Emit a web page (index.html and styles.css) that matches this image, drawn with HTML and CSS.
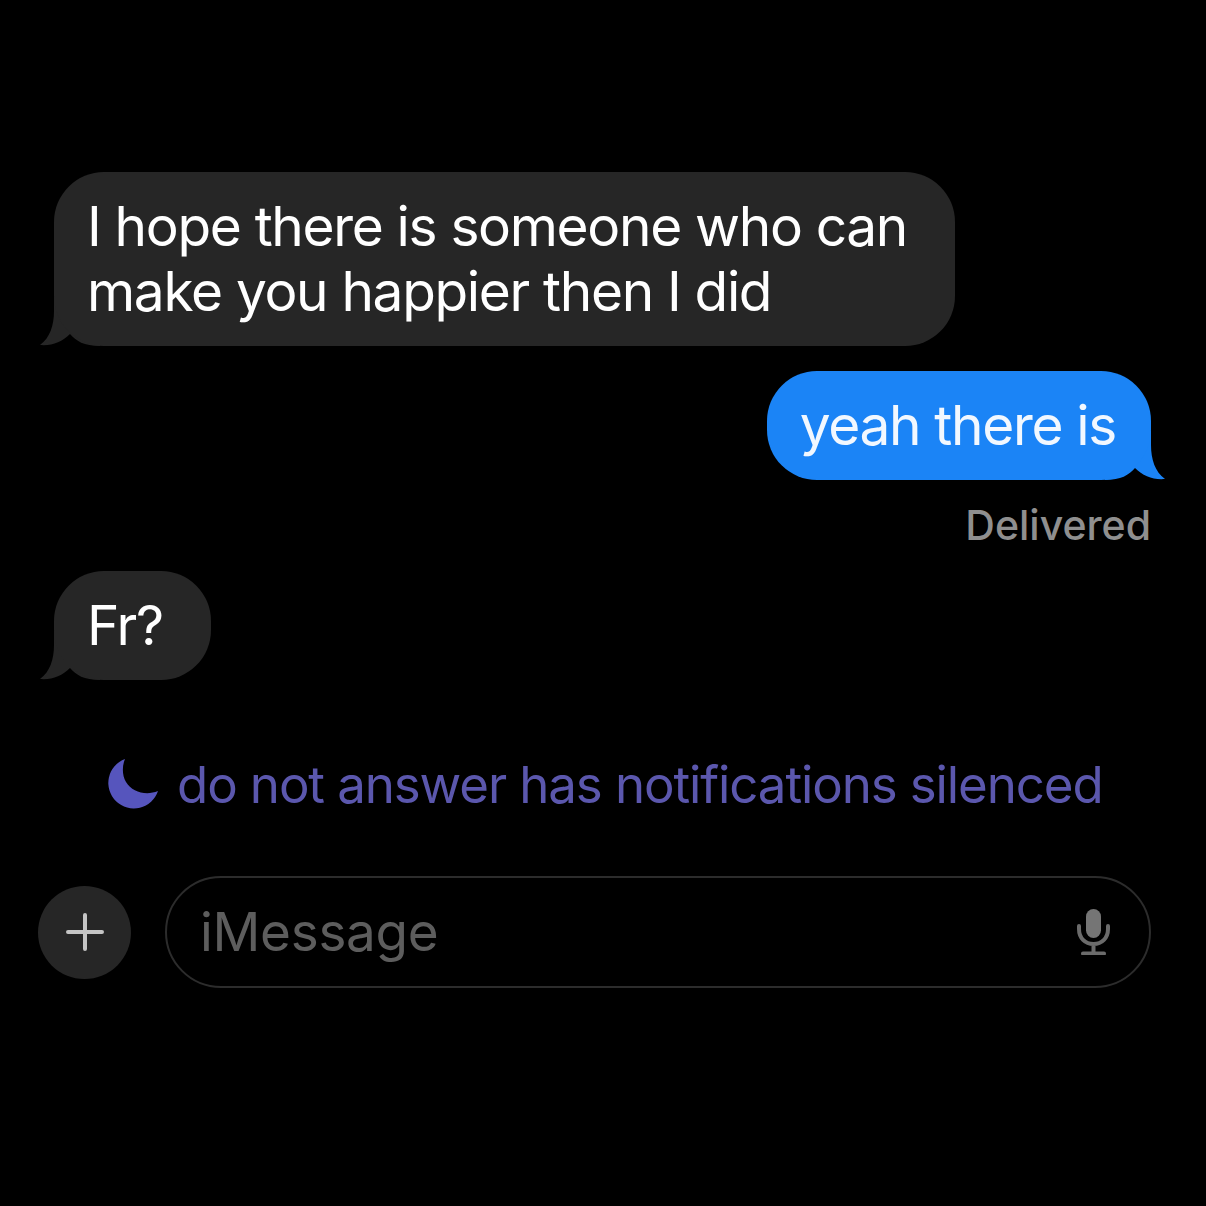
FILE: index.html
```html
<!DOCTYPE html>
<html lang="en">
<head>
  <meta charset="UTF-8">
  <meta name="viewport" content="width=device-width, initial-scale=1.0">
  <title>Messages</title>
  <link rel="stylesheet" href="styles.css">
</head>
<body>

<div id="thread">
  <div class="bubble received">
    <svg class="tail" width="60" height="50" viewBox="0 0 60 50"><path d="M14 0V14C14 28 10 41 0 48C12 49 22 45 30 37C36 44 44 49 60 49V0Z"/></svg>
    I hope there is someone who can<br>make you happier then I did
  </div>

  <div class="bubble sent">
    yeah there is
    <svg class="tail" width="60" height="50" viewBox="0 0 60 50"><path d="M46 0V14C46 28 50 41 60 48C48 49 38 45 30 37C24 44 16 49 0 49V0Z"/></svg>
  </div>
  <div class="status">Delivered</div>

  <div class="bubble received">
    <svg class="tail" width="60" height="50" viewBox="0 0 60 50"><path d="M14 0V14C14 28 10 41 0 48C12 49 22 45 30 37C36 44 44 49 60 49V0Z"/></svg>
    Fr?
  </div>

  <div class="silenced">
    <svg class="moon" width="50" height="51" viewBox="0 0 50 51"><path d="M17 1A25.500 25.500 0 1 0 50 33C38 38 24 34 18 24C14 17 14 8 17 1Z"/></svg>
    <span>do not answer has notifications silenced</span>
  </div>

  <div class="composer">
    <div class="plus">
      <svg width="38" height="38" viewBox="0 0 38 38"><path d="M2 19H36M19 2V36"/></svg>
    </div>
    <div class="field">
      <span>iMessage</span>
      <svg class="mic" width="34" height="46" viewBox="0 0 34 46">
        <rect class="capsule" x="9" y="0" width="15" height="29" rx="7.500"/>
        <path d="M2 17V20C2 29 8 35 16.500 35C25 35 31 29 31 20V17M16.500 35V44M6 44.500H27"/>
      </svg>
    </div>
  </div>
</div>

</body>
</html>
```

FILE: styles.css
```css
body {
  font-family: Inter, 'Liberation Sans', sans-serif;
  background-color: #000;
  margin: 0;
}

#thread {
  display: flex;
  flex-direction: column;
  align-items: flex-start;
  padding: 172px 55px 0 54px;
}

.bubble {
  position: relative;
  font-size: 55px;
  line-height: 65px;
  letter-spacing: -1.33px;
  color: #fff;
  white-space: nowrap;
  border-radius: 50px;
}

.tail {
  position: absolute;
  bottom: -1px;
  z-index: -1;
}

.received {
  padding: 22px 48px 22px 33px;
  background-color: #262626;
}

.received .tail {
  left: -14px;
  fill: #262626;
}

.received + .received,
.status + .received {
  margin-top: 22px;
}

.sent {
  align-self: flex-end;
  padding: 22px 35px 22px 33px;
  margin-top: 25px;
  background-color: #1b84f6;
  color: #f2f8ff;
}

.sent .tail {
  right: -14px;
  fill: #1b84f6;
}

.status {
  align-self: flex-end;
  margin-top: 21px;
  font-size: 41px;
  line-height: 48px;
  font-weight: 500;
  color: #8f8f8f;
}

.silenced {
  display: flex;
  align-items: center;
  gap: 19px;
  margin: 75px 0 0 54px;
  font-size: 51px;
  line-height: 60px;
  letter-spacing: -1.1px;
  color: #5b57ad;
}

.moon {
  margin-bottom: 4px;
  fill: #5655bd;
}

.composer {
  display: flex;
  align-items: center;
  gap: 34px;
  width: 1113px;
  margin: 61px 0 0 -16px;
}

.plus {
  display: flex;
  align-items: center;
  justify-content: center;
  width: 93px;
  height: 93px;
  border-radius: 50%;
  background-color: #262626;
}

.plus svg {
  fill: none;
  stroke: #c4c4c4;
  stroke-width: 4;
  stroke-linecap: round;
}

.field {
  flex: 1;
  display: flex;
  align-items: center;
  justify-content: space-between;
  box-sizing: border-box;
  height: 112px;
  padding: 0 38px 0 33px;
  border: 2px solid #2c2c2c;
  border-radius: 56px;
  font-size: 53px;
  letter-spacing: -0.3px;
  color: #5d5d5d;
}

.mic {
  fill: none;
  stroke: #6b6b6b;
  stroke-width: 4;
  stroke-linecap: round;
}

.mic .capsule {
  fill: #757575;
  stroke: none;
}
```
